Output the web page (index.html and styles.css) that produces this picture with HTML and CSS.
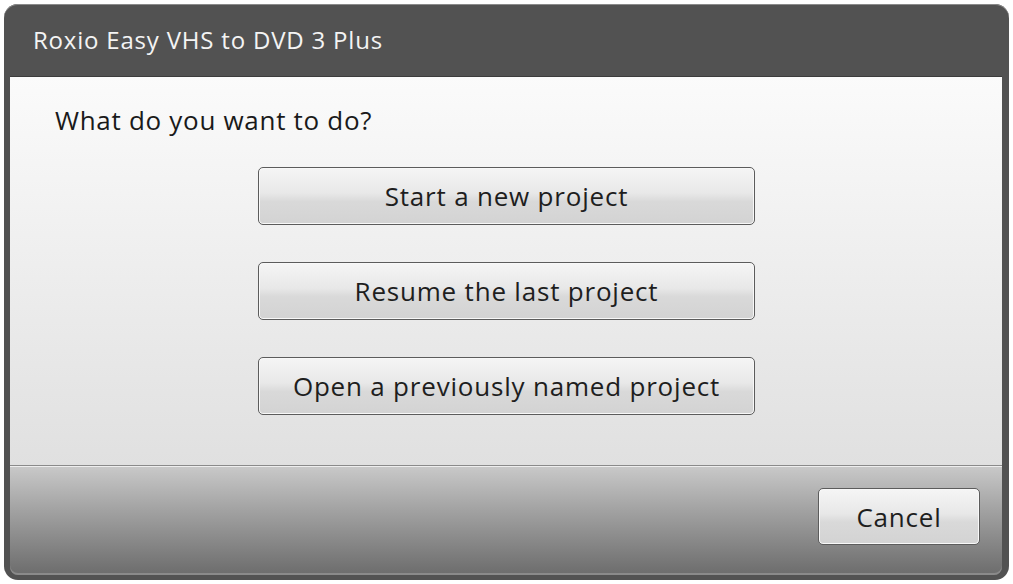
FILE: index.html
```html
<!DOCTYPE html>
<html>
<head>
<meta charset="utf-8">
<link rel="stylesheet" href="styles.css">
</head>
<body>
<div class="window">
  <div class="titlebar">Roxio Easy VHS to DVD 3 Plus</div>
  <div class="content">
    <div class="question">What do you want to do?</div>
    <div class="choices">
      <div class="btn big">Start a new project</div>
      <div class="btn big">Resume the last project</div>
      <div class="btn big">Open a previously named project</div>
    </div>
  </div>
  <div class="footer">
    <div class="btn cancel">Cancel</div>
  </div>
</div>
</body>
</html>
```
FILE: styles.css
```css
html, body {
  margin: 0;
  padding: 0;
  background: #ffffff;
}
body {
  font-family: "Open Sans", "Noto Sans", "Liberation Sans", sans-serif;
  width: 1013px;
  height: 584px;
  overflow: hidden;
}
.window {
  margin: 4px 0 0 4px;
  width: 1005px;
  height: 576px;
  box-sizing: border-box;
  background: #525252;
  border-radius: 14px;
  padding: 0 7px 5px 6px;
  display: flex;
  flex-direction: column;
  box-shadow: inset 0 1px 0 #8a8a8a;
}
.titlebar {
  height: 73px;
  flex: none;
  box-sizing: border-box;
  padding: 22px 0 0 23px;
  color: #f4f4f4;
  font-size: 24px;
  letter-spacing: 0.8px;
  line-height: 28px;
  border-bottom: 1px solid #3c3c3c;
}
.content {
  flex: 1;
  background: linear-gradient(#fbfbfb, #e0e0e0);
  display: flex;
  flex-direction: column;
  border-bottom: 1px solid #8a8a8a;
}
.question {
  padding: 27px 0 0 45px;
  font-size: 26px;
  line-height: 32px;
  color: #1a1a1a;
  letter-spacing: 0.7px;
}
.choices {
  display: flex;
  flex-direction: column;
  align-items: flex-start;
  gap: 37px;
  padding: 31px 0 0 248px;
}
.btn {
  box-sizing: border-box;
  border: 1px solid #5c5c5c;
  border-radius: 5px;
  background: linear-gradient(#f5f5f5 0%, #e8e8e8 45%, #d9d9d9 60%, #d3d3d3 100%);
  box-shadow: inset 0 0 0 1px #f8f8f8;
  color: #1e1e1e;
  display: flex;
  align-items: center;
  justify-content: center;
  letter-spacing: 0.8px;
}
.big {
  width: 497px;
  height: 58px;
  font-size: 26px;
}
.footer {
  flex: none;
  height: 109px;
  background: linear-gradient(#c8c8c8, #a2a2a2 40%, #6c6c6c);
  border-top: 1px solid #eeeeee;
  display: flex;
  justify-content: flex-end;
  align-items: flex-start;
  padding: 21px 22px 0 0;
  box-sizing: border-box;
  border-radius: 0 0 8px 8px;
  box-shadow: inset 0 -2px 0 #8a8a8a;
}
.cancel {
  width: 162px;
  height: 57px;
  font-size: 26px;
}
```
